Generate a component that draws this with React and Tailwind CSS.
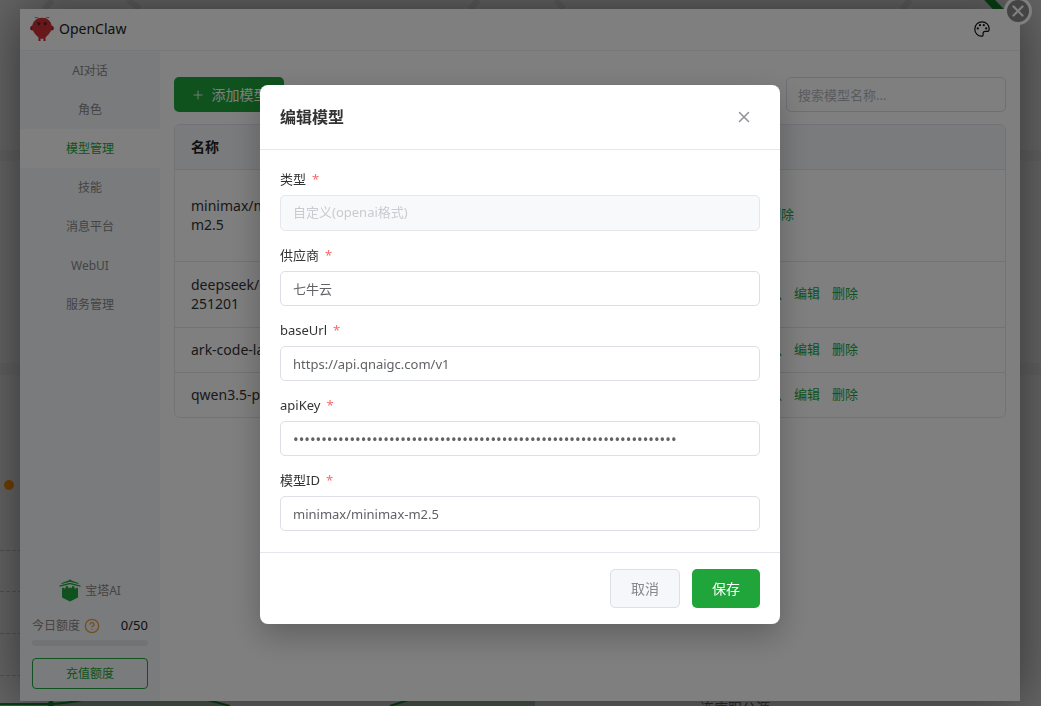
import { useState } from 'react';
import { Plus, X, CircleHelp } from 'lucide-react';

const NAV_ITEMS = ['AI对话', '角色', '模型管理', '技能', '消息平台', 'WebUI', '服务管理'];

const MODELS = [
  { id: 1, name: 'minimax/minimax-\nm2.5', provider: '七牛云', isDefault: true, rowClass: 'h-[92px]' },
  { id: 2, name: 'deepseek/deepseek-v3.2-\n251201', provider: '七牛云', isDefault: false, rowClass: 'h-[66px]' },
  { id: 3, name: 'ark-code-latest', provider: '火山引擎', isDefault: false, rowClass: 'h-[45px]' },
  { id: 4, name: 'qwen3.5-plus', provider: '阿里云', isDefault: false, rowClass: 'h-[45px]' },
];

const FIELDS = [
  { id: 'provider', label: '供应商', type: 'text' },
  { id: 'baseUrl', label: 'baseUrl', type: 'text' },
  { id: 'apiKey', label: 'apiKey', type: 'password' },
  { id: 'modelId', label: '模型ID', type: 'text' },
];

function CrabLogo() {
  return (
    <svg viewBox="0 0 24 24" className="h-6 w-6" aria-hidden="true">
      <path d="M9 1.500 6.500 .5 4.800 .6M15 1.500 17.500 .5l1.700 .1" fill="none" stroke="#c9282e" strokeWidth=".8" />
      <path d="M3 8.500C1 8.700 0 10 .1 11.500c.2 1.600 1.600 2.300 3 1.800zM21 8.500c2 .2 3 1.500 2.900 3-.2 1.600-1.600 2.300-3 1.800z" fill="#b5242a" />
      <path d="M8.500 20.500h2V24h-2zM13.500 20.500h2V24h-2z" fill="#c9282e" />
      <path d="M12 .8c5.800 0 9.800 4 9.800 9.600 0 3.500-2.600 6.400-5.300 9-1.500 1.500-2.800 2.300-4.500 2.300s-3-.8-4.500-2.300c-2.700-2.600-5.300-5.500-5.300-9C2.200 4.800 6.200 .8 12 .8z" fill="#cf3036" />
      <path d="M7 5.500l3.300 .8M17 5.500l-3.300 .8" stroke="#6d1216" strokeWidth="1.200" />
      <circle cx="8.800" cy="7.300" r="1" fill="#3a1a1c" />
      <circle cx="15.200" cy="7.300" r="1" fill="#3a1a1c" />
    </svg>
  );
}

function PagodaLogo() {
  return (
    <svg viewBox="0 0 22 23" className="h-[23px] w-[22px]" aria-hidden="true">
      <path d="M11 .3 12.500 1.600 19.500 4v1L11 2.800 2.500 5V4L9.500 1.600z" fill="#20a53a" />
      <path d="M.5 6.500 11 3.800l10.500 2.700v1.300L11 5.200 .5 7.800z" fill="#20a53a" />
      <path d="M3 9 4.800 8.500v1.300l1.700-.5V7.500L9 6.900v1.800h4V6.900l2.500 .6v1.800l1.700 .5V8.500L19 9v9.500l-8 4-8-4z" fill="#20a53a" />
    </svg>
  );
}

function PaletteIcon() {
  return (
    <svg viewBox="0 0 16 16" className="h-4 w-4" fill="none" stroke="#111" strokeWidth="1.200" aria-hidden="true">
      <path d="M8 .8C3.900 .8 .8 4 .8 8s3 7.200 6.600 7.200c1.500 0 1.900-1 1.700-2.100-.3-1.600 .6-2.700 2.100-2.700h1.700c1.500 0 2.300-1 2.300-2.500C15.200 3.800 12.100 .8 8 .8z" />
      <g fill="#111" stroke="none">
        <circle cx="3.800" cy="7.400" r="1.100" />
        <circle cx="6" cy="4.200" r="1.100" />
        <circle cx="9.800" cy="4.200" r="1.100" />
        <circle cx="12.200" cy="7.400" r="1.100" />
      </g>
    </svg>
  );
}

// 面板首页，被窗口遮住，只露出四周
function Dashboard() {
  return (
    <div className="absolute inset-0 overflow-hidden bg-[#cacaca]" aria-hidden="true">
      <svg viewBox="0 0 1041 706" className="h-full w-full" preserveAspectRatio="none">
        <path d="M0 150h1041v11H0zM0 363h1041v12H0z" fill="#c3c3c3" />
        <path d="M52 0q-4 6-8 9M128 0q6 5 12 9M478 0q-4 5-8 9M556 0q4 5 8 9M910 0q-4 5-8 9" stroke="#bcbcbc" strokeWidth="6" fill="none" />
        <path d="M984-6l18 19" stroke="#128028" strokeWidth="8" />
        <circle cx="9" cy="485" r="5" fill="#e08000" />
        <path d="M0 550.500h20M0 591.500h20M0 633.500h20M0 675.500h20" stroke="#a4a4a4" strokeDasharray="4 2" />
        <path d="M0 704h51q18-1 31-4h126l20 6H0zM390 706l18-6h127v6z" fill="#8fae94" />
        <path d="M0 704h51q18-1 31-4M208 700l22 6M390 706l18-6" stroke="#128028" strokeWidth="2" fill="none" />
        <circle cx="51" cy="704" r="3" fill="#128028" />
      </svg>
      <span className="absolute -bottom-3 left-[700px] text-sm leading-5 text-[#555]">连库职公源</span>
    </div>
  );
}

function Sidebar({ active, onSelect }) {
  return (
    <aside className="flex w-[140px] shrink-0 flex-col bg-[#f5f7fa] text-xs">
      <nav className="flex flex-col">
        {NAV_ITEMS.map((item) => (
          <button
            key={item}
            type="button"
            onClick={() => onSelect(item)}
            className={item === active ? 'h-[39px] bg-white text-[#20a53a]' : 'h-[39px] text-[#888]'}
          >
            {item}
          </button>
        ))}
      </nav>
      <div className="mt-auto flex flex-col px-3 pb-3">
        <div className="flex items-center justify-center gap-1 text-[#888]">
          <PagodaLogo />
          <span>宝塔AI</span>
        </div>
        <div className="mt-[14px] flex h-5 items-center text-[#888]">
          <label htmlFor="quota">今日额度</label>
          <CircleHelp className="ml-1 h-4 w-4 text-[#e6a23c]" strokeWidth={2} />
          <span className="ml-auto text-[13px] text-[#222]">0/50</span>
        </div>
        <progress
          id="quota"
          value={0}
          max={50}
          className="mt-1 h-[6px] w-full appearance-none overflow-hidden rounded-full [&::-webkit-progress-bar]:bg-[#e4e6ea] [&::-webkit-progress-value]:bg-[#20a53a]"
        />
        <button type="button" className="mt-3 h-[31px] rounded border border-[#20a53a] text-[#20a53a]">
          充值额度
        </button>
      </div>
    </aside>
  );
}

function ModelTable() {
  return (
    <div className="mt-3 overflow-hidden rounded-md border border-[#e4e7ed]">
      <table className="w-full table-fixed text-left">
        <thead className="bg-[#f5f7fa] text-sm text-[#222]">
          <tr className="h-11 border-b border-[#e4e7ed]">
            <th className="w-[220px] px-4 font-bold">名称</th>
            <th className="px-4 font-bold">供应商</th>
            <th className="w-[291px] px-4 font-bold">操作</th>
          </tr>
        </thead>
        <tbody>
          {MODELS.map((model) => (
            <tr key={model.id} className={`${model.rowClass} border-b border-[#e4e7ed] last:border-b-0`}>
              <td className="px-4 text-sm leading-[19px] whitespace-pre-line text-[#333]">{model.name}</td>
              <td className="px-4 text-[13px] text-[#333]">{model.provider}</td>
              <td className="px-4 text-[13px] text-[#20a53a]">
                <div className="flex gap-3">
                  {!model.isDefault && <button type="button">设为默认</button>}
                  <button type="button">编辑</button>
                  <button type="button">删除</button>
                </div>
              </td>
            </tr>
          ))}
        </tbody>
      </table>
    </div>
  );
}

function RequiredLabel({ htmlFor, children }) {
  return (
    <label htmlFor={htmlFor} className="mb-[6px] h-5 leading-5 text-[#333]">
      {children}
      <span className="ml-[6px] text-[#f56c6c]">*</span>
    </label>
  );
}

function EditModelDialog() {
  const [values, setValues] = useState({
    provider: '七牛云',
    baseUrl: 'https://api.qnaigc.com/v1',
    apiKey: 'x'.repeat(68),
    modelId: 'minimax/minimax-m2.5',
  });

  return (
    <form
      role="dialog"
      aria-labelledby="dialog-title"
      className="w-[520px] rounded-lg bg-white text-[13px] shadow-[0_12px_32px_rgba(0,0,0,0.25)]"
    >
      <header className="flex h-[65px] items-center justify-between border-b border-[#e4e7ed] px-5">
        <h2 id="dialog-title" className="text-base font-bold text-[#333]">编辑模型</h2>
        <button type="button" aria-label="关闭" className="p-[7px] text-[#909399]">
          <X className="h-[18px] w-[18px]" strokeWidth={2} />
        </button>
      </header>
      <div className="flex flex-col gap-[14px] px-5 pt-[19px] pb-[21px]">
        <div className="flex flex-col">
          <RequiredLabel htmlFor="type">类型</RequiredLabel>
          <select
            id="type"
            disabled
            className="h-9 appearance-none rounded-[5px] border border-[#e4e7ed] bg-[#f8f9fb] px-3 text-[#c8cbd1] opacity-100"
          >
            <option>自定义(openai格式)</option>
          </select>
        </div>
        {FIELDS.map((field) => (
          <div key={field.id} className="flex flex-col">
            <RequiredLabel htmlFor={field.id}>{field.label}</RequiredLabel>
            <input
              id={field.id}
              type={field.type}
              autoComplete="off"
              value={values[field.id]}
              onChange={(e) => setValues({ ...values, [field.id]: e.target.value })}
              className={`h-[35px] rounded-[5px] border border-[#dcdfe6] px-3 text-[#606266] ${field.type === 'password' ? 'text-[15px]' : ''}`}
            />
          </div>
        ))}
      </div>
      <footer className="flex justify-end gap-3 border-t border-[#e4e7ed] px-5 py-4 text-sm">
        <button type="button" className="h-[39px] w-[70px] rounded-[5px] border border-[#dcdfe6] bg-[#f5f7fa] text-[#888]">
          取消
        </button>
        <button type="submit" className="h-[39px] w-[68px] rounded-[5px] bg-[#20a53a] text-white">保存</button>
      </footer>
    </form>
  );
}

export default function App() {
  const [active, setActive] = useState('模型管理');

  return (
    <div className="relative flex min-h-screen flex-col pt-[9px] pr-[21px] pb-[5px] pl-5 font-['Noto_Sans','Noto_Sans_CJK_SC',sans-serif]">
      <Dashboard />
      <section className="relative flex flex-1 flex-col bg-white shadow-[0_0_50px_rgba(0,0,0,0.5)]">
        <header className="flex h-[42px] items-center border-b border-[#ebeef5] pr-[30px] pb-[2px] pl-[10px]">
          <CrabLogo />
          <h1 className="ml-[5px] text-sm text-[#222]">OpenClaw</h1>
          <button type="button" aria-label="主题" className="ml-auto">
            <PaletteIcon />
          </button>
        </header>
        <div className="flex flex-1">
          <Sidebar active={active} onSelect={setActive} />
          <main className="min-w-0 flex-1 px-[14px] pt-[26px]">
            <div className="flex items-center justify-between">
              <button
                type="button"
                className="flex h-[35px] w-[110px] items-center justify-center gap-[7px] rounded-[5px] bg-[#20a53a] text-sm whitespace-nowrap text-white"
              >
                <Plus className="h-[14px] w-[14px]" strokeWidth={1.5} />
                添加模型
              </button>
              <input
                type="search"
                aria-label="搜索模型名称"
                placeholder="搜索模型名称..."
                className="h-[35px] w-[220px] rounded-[5px] border border-[#dcdfe6] px-[11px] text-[13px] placeholder:text-[#b4b7bd]"
              />
            </div>
            <ModelTable />
          </main>
        </div>
        <button
          type="button"
          aria-label="关闭窗口"
          className="absolute -top-3 -right-3 flex h-7 w-7 items-center justify-center rounded-full border-[3px] border-white bg-[#888] text-white"
        >
          <X className="h-[18px] w-[18px]" strokeWidth={3} />
        </button>
      </section>
      <div className="fixed inset-0 flex items-start justify-center bg-black/50 pt-[85px] pr-px">
        <EditModelDialog />
      </div>
    </div>
  );
}
